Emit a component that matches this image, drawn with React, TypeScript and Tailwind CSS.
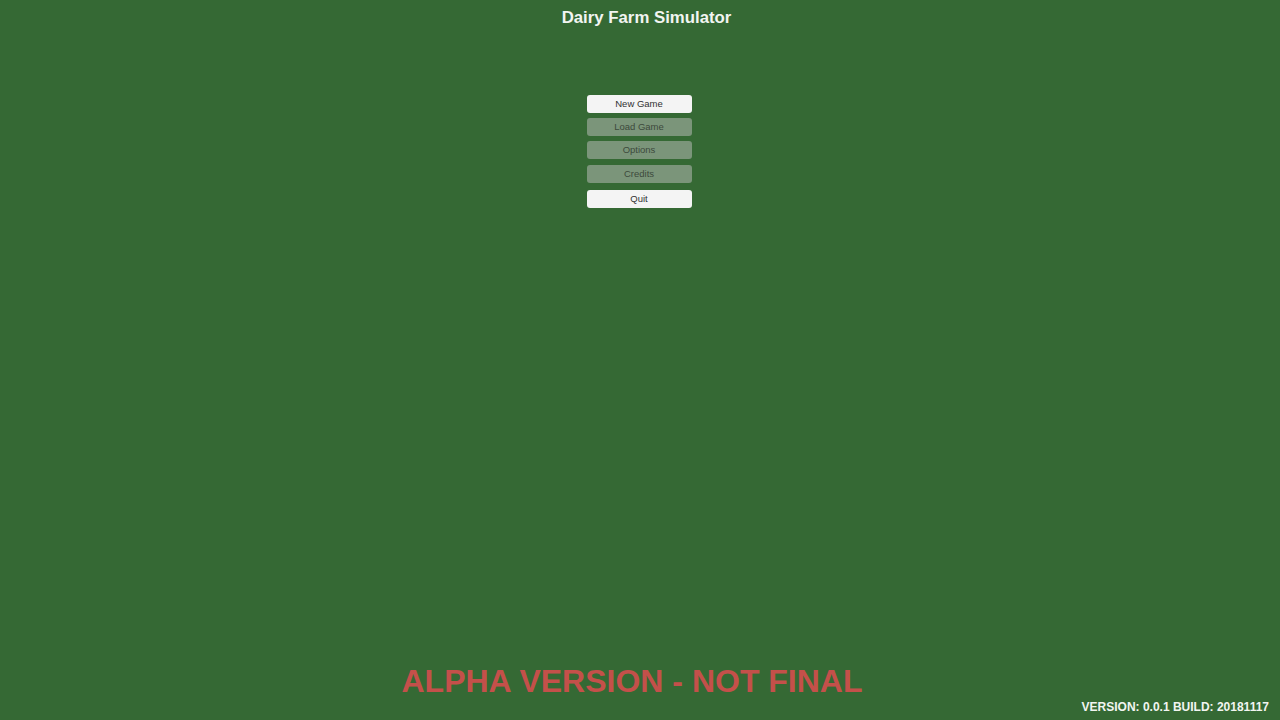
import React from "react";

type TMenuButton = {
  label: string;
  disabled?: boolean;
  className?: string;
};

const MenuButton = ({ label, disabled = false, className = "" }: TMenuButton) => {
  return (
    <button
      className={`${
        disabled ? "bg-[#7b957a] text-[#3d4a3c]" : "bg-[#f4f4f4] text-[#323232]"
      } w-[105px] h-[18px] rounded-[3px] text-[9.5px] leading-none flex items-center justify-center ${className}`}
    >
      {label}
    </button>
  );
};

const App = () => {
  return (
    <div
      className="w-[1280px] h-[720px] bg-[#356934] flex flex-col overflow-hidden"
      style={{ fontFamily: '"Liberation Sans", Arial, sans-serif' }}
    >
      <div className="pt-[8px] flex justify-center">
        <h1 className="ml-[13px] text-[16.8px] font-bold text-[#f2f5f1] leading-[20px]">
          Dairy Farm Simulator
        </h1>
      </div>

      <div className="mt-[67px] mr-[2px] flex flex-col items-center gap-[5px]">
        <MenuButton label="New Game" />
        <MenuButton label="Load Game" disabled />
        <MenuButton label="Options" disabled className="mb-[1px]" />
        <MenuButton label="Credits" disabled className="mb-[2px]" />
        <MenuButton label="Quit" />
      </div>

      <div className="flex-1" />

      <div className="flex justify-center">
        <p className="mr-[16px] text-[32px] font-bold text-[#c4504a] leading-[36px]">
          ALPHA VERSION - NOT FINAL
        </p>
      </div>
      <div className="flex justify-end pr-[11px] pb-[6px] pt-[1px]">
        <p className="text-[12px] font-bold text-[#f2f5f1] leading-[14px]">
          VERSION: 0.0.1 BUILD: 20181117
        </p>
      </div>
    </div>
  );
};

export default App;
